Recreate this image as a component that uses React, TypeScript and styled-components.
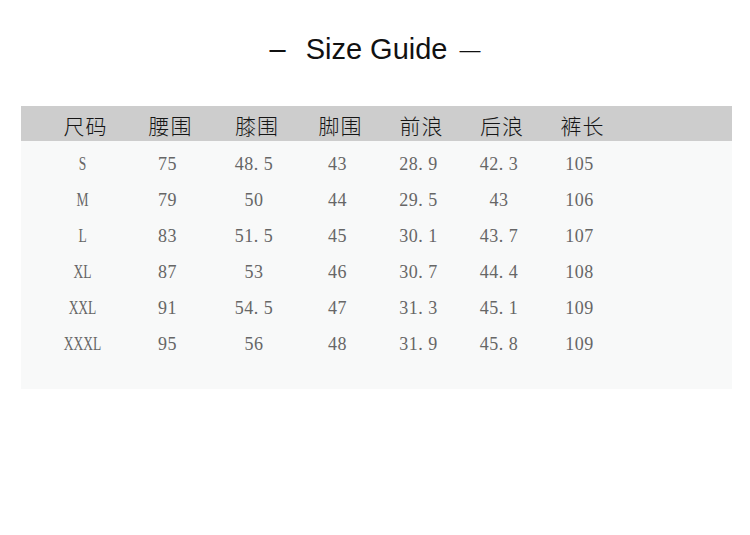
import React from "react";
import styled, { createGlobalStyle } from "styled-components";

const Global = createGlobalStyle`
  html, body { margin: 0; padding: 0; background: #ffffff; }
  body { width: 750px; height: 535px; overflow: hidden; }
`;

const Page = styled.div`
  width: 750px;
  height: 535px;
  background: #ffffff;
  padding-top: 35px;
  box-sizing: border-box;
`;

const Title = styled.h1`
  margin: 0;
  display: flex;
  justify-content: center;
  align-items: center;
  height: 29px;
  font-family: "Liberation Sans", Arial, sans-serif;
  font-weight: 400;
  font-size: 29px;
  line-height: 29px;
  color: #111111;
`;

const Dash = styled.span<{ $size: number; $gapL: number; $gapR: number }>`
  font-size: ${(p) => p.$size}px;
  margin-left: ${(p) => p.$gapL}px;
  margin-right: ${(p) => p.$gapR}px;
`;

const Table = styled.div`
  margin: 42px 0 0 21px;
  width: 711px;
`;

const COLS = "83px 87px 86px 81px 81px 80px 81px";

const HeaderRow = styled.div`
  display: grid;
  grid-template-columns: ${COLS};
  align-items: center;
  height: 35px;
  padding-left: 23px;
  background: #cdcdcd;
`;

const HeadCell = styled.div`
  text-align: center;
  font-family: "Noto Sans CJK SC", "Noto Sans", sans-serif;
  font-weight: 300;
  font-size: 21px;
  letter-spacing: 1px;
  color: #151515;
  line-height: 35px;
  padding-top: 2px;
`;

const Body = styled.div`
  background: #f8f9f9;
  padding: 5px 0 27px 20px;
`;

const Row = styled.div`
  display: grid;
  grid-template-columns: ${COLS};
  align-items: center;
  height: 36px;
`;

const Cell = styled.div<{ $narrow?: boolean }>`
  text-align: center;
  font-family: "Liberation Serif", "Times New Roman", serif;
  font-size: 18px;
  letter-spacing: ${(p) => (p.$narrow ? "0" : "0.5px")};
  color: #666666;
  line-height: 36px;
  transform: ${(p) => (p.$narrow ? "scaleX(0.75)" : "none")};
`;

const headers = ["尺码", "腰围", "膝围", "脚围", "前浪", "后浪", "裤长"];

const rows = [
  ["S", "75", "48. 5", "43", "28. 9", "42. 3", "105"],
  ["M", "79", "50", "44", "29. 5", "43", "106"],
  ["L", "83", "51. 5", "45", "30. 1", "43. 7", "107"],
  ["XL", "87", "53", "46", "30. 7", "44. 4", "108"],
  ["XXL", "91", "54. 5", "47", "31. 3", "45. 1", "109"],
  ["XXXL", "95", "56", "48", "31. 9", "45. 8", "109"],
];

export default function App() {
  return (
    <>
      <Global />
      <Page>
        <Title>
          <Dash $size={29} $gapL={0} $gapR={20}>–</Dash>
          Size Guide
          <Dash $size={21} $gapL={12} $gapR={0}>—</Dash>
        </Title>
        <Table>
          <HeaderRow>
            {headers.map((h) => (
              <HeadCell key={h}>{h}</HeadCell>
            ))}
          </HeaderRow>
          <Body>
            {rows.map((r, i) => (
              <Row key={i}>
                {r.map((c, j) => (
                  <Cell key={j} $narrow={j === 0}>
                    {c}
                  </Cell>
                ))}
              </Row>
            ))}
          </Body>
        </Table>
      </Page>
    </>
  );
}
